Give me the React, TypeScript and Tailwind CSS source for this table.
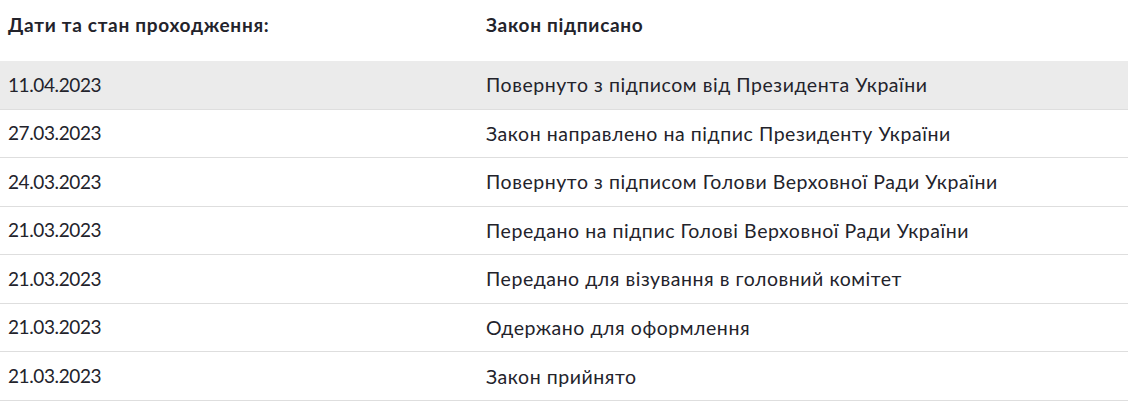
import React from "react";

const rows: [string, string][] = [
  ["11.04.2023", "Повернуто з підписом від Президента України"],
  ["27.03.2023", "Закон направлено на підпис Президенту України"],
  ["24.03.2023", "Повернуто з підписом Голови Верховної Ради України"],
  ["21.03.2023", "Передано на підпис Голові Верховної Ради України"],
  ["21.03.2023", "Передано для візування в головний комітет"],
  ["21.03.2023", "Одержано для оформлення"],
  ["21.03.2023", "Закон прийнято"],
];

export default function App() {
  return (
    <div className="w-[1128px] h-[402px] bg-white overflow-hidden text-[#23232b]" style={{ fontFamily: "Lato, 'Noto Sans', sans-serif" }}>
      <div className="flex h-[61px] pt-[11px]">
        <div className="w-[486px] pl-[8px] text-[19px] font-bold tracking-[0.7px]">Дати та стан проходження:</div>
        <div className="flex-1 text-[19px] font-bold tracking-[0.7px]">Закон підписано</div>
      </div>
      {rows.map(([d, t], i) => (
        <div
          key={i}
          className={`flex items-center h-[48.57px] border-b border-[#dedede] ${i === 0 ? "bg-[#ebebeb]" : "bg-white"}`}
        >
          <div className="w-[486px] pl-[8px] text-[19px] tracking-[-0.4px]">{d}</div>
          <div className="flex-1 text-[19.5px] tracking-[0.55px]">{t}</div>
        </div>
      ))}
    </div>
  );
}
